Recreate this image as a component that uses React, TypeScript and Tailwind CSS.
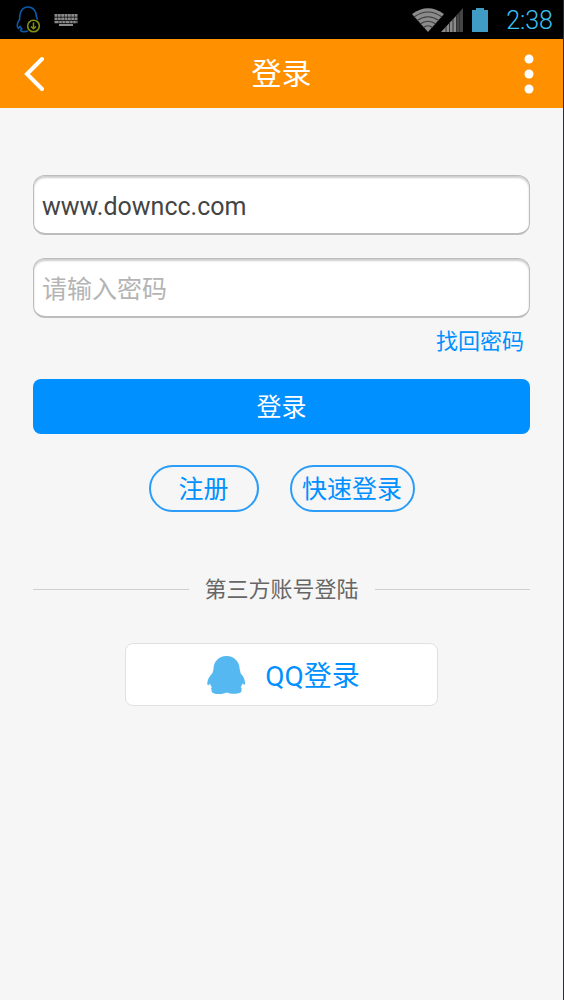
import { FunctionComponent, useState } from "react";

const QQOutlineIcon: FunctionComponent = () => (
  <svg className="w-6 h-7" viewBox="0 0 24 28" fill="none">
    <path d="M12 25c-2.500 1-7 .8-7.500-.6 0-.8 1.200-1.200 1.500-1.600-1-.5-1.800-1.500-2-2.600L2.300 22.500c-1.800-1.500-1.200-6.500 1.300-8.800C3.500 5.500 6.500 1 12 1s8.500 4.500 8.500 10c.5.700.8 1.500.7 2.700" stroke="#0d58a8" strokeWidth="1.600" strokeLinejoin="round" />
    <circle cx="17.500" cy="20" r="5.800" fill="#000" stroke="#83900f" strokeWidth="1.600" />
    <path d="M17.500 16.500v6M15 20.500l2.500 2.300 2.500-2.300" stroke="#83900f" strokeWidth="1.500" />
  </svg>
)

const KeyboardIcon: FunctionComponent = () => (
  <svg className="w-6 h-3" viewBox="0 0 24 12" stroke="#8a8a8a">
    <path d="M0.500 1.400h23M0.500 4.800h23" strokeWidth="2.600" strokeDasharray="2.900 0.450" />
    <path d="M0.500 8h23" strokeWidth="2.300" strokeDasharray="4.200 0.500 2.600 0.500 2.600 0.500" />
    <path d="M5 11h14" strokeWidth="2" />
  </svg>
)

const WifiIcon: FunctionComponent = () => (
  <svg className="w-8 h-6" viewBox="0 0 32 24">
    <path d="M0 6Q16-5.500 32 6L16 24z" fill="#8b8b8b" />
    <path d="M2 9Q16-1 30 9M5 12.500Q16 5 27 12.500M8 16Q16 10.500 24 16M11.500 19.500Q16 16 20.500 19.500" fill="none" stroke="#3c3c3c" strokeWidth="1.200" />
  </svg>
)

const SignalIcon: FunctionComponent = () => (
  <svg className="w-6 h-6" viewBox="0 0 24 24">
    <path d="M1 24L16 8v16z" fill="#8b8b8b" />
    <path d="M16 8l7-8v24h-7z" fill="#454545" />
    <path d="M6 18v6M9.500 14v10M13 11v13M16.500 7v17M19.500 4v20" stroke="#333" strokeWidth="1" />
  </svg>
)

const BatteryIcon: FunctionComponent = () => (
  <svg className="w-4 h-6" viewBox="0 0 16 25" preserveAspectRatio="none">
    <path d="M0 2h4V0h8v2h4v23H0z" fill="#409cc5" />
  </svg>
)

const QQIcon: FunctionComponent = () => (
  <svg className="w-[38px] h-10" viewBox="0 0 38 40" fill="#56b8f0">
    <path d="M19.500 1C11.500 1 6.500 7 6.500 14c0 1.500-.8 2.500-1 4C2 21.500 .3 25 .3 28.500c0 2 .8 2 1.700 1.200l1.300-1c.3 1.700 1 2.800 1.700 3.800-1.300.3-1.300 1.300-.2 2-1.200 2.500 1 4.500 7 4.500 4 0 6.200-.6 8-1.500 2 .9 5 1.500 8.500 1.300 5.500-.3 7.200-2.300 6-4.500 1-1 .5-1.500-.7-2 .8-1 1.500-2.300 1.900-3.800l1.300 1c.7.5 1.200.5 1.200-1 0-3.500-1.200-7-4.500-10.500 0-1.500-.6-2.500-.8-4C32.500 7 27.500 1 19.500 1z" />
  </svg>
)

export default function App() {

  const [userName, setUserName] = useState("www.downcc.com");
  const [password, setPassword] = useState("");

  return (
    <div className="min-h-screen flex flex-col bg-[#f6f6f6] border-r border-[#263238] font-['Roboto','Noto_Sans_CJK_SC',sans-serif]">
      <div className="h-[39px] bg-black flex items-center justify-between pl-4 pr-[10px]">
        <div className="flex items-center gap-[14px]">
          <QQOutlineIcon />
          <KeyboardIcon />
        </div>
        <div className="flex items-center">
          <div className="flex items-center -space-x-1 mr-2">
            <WifiIcon />
            <SignalIcon />
          </div>
          <BatteryIcon />
          <span className="ml-[18px] pt-[2px] text-[25px] leading-8 font-light text-[#3cc0f0]">2:38</span>
        </div>
      </div>

      <header className="h-[69px] bg-[#ff9000] text-white grid grid-cols-3 items-center px-6">
        <button type="button" aria-label="返回" className="justify-self-start">
          <svg className="w-5 h-9" viewBox="0 0 20 36" fill="none" stroke="currentColor" strokeWidth="4" strokeLinecap="round">
            <path d="M18 3L3 18 18 33" />
          </svg>
        </button>
        <h1 className="text-center text-[30px] leading-9">登录</h1>
        <button type="button" aria-label="更多" className="justify-self-end px-[5px]">
          <svg className="w-[10px] h-10" viewBox="0 0 10 40" fill="currentColor">
            <circle cx="5" cy="5" r="4.500" />
            <circle cx="5" cy="20" r="4.500" />
            <circle cx="5" cy="35" r="4.500" />
          </svg>
        </button>
      </header>

      <main className="px-[33px] pt-[67px]">
        <form onSubmit={(e) => e.preventDefault()}>
          <input
            type="text"
            aria-label="账号"
            className="block w-full h-[60px] px-2 pt-1 rounded-xl border border-b-2 border-[#bdbdbd] bg-white text-[25px] text-[#444] outline-none shadow-[inset_0_2px_2px_rgba(0,0,0,0.2)]"
            value={userName}
            onChange={(e) => setUserName(e.target.value)}
          />
          <input
            type="password"
            aria-label="密码"
            placeholder="请输入密码"
            className="block w-full h-[60px] mt-[23px] px-2 pt-1 rounded-xl border border-b-2 border-[#bdbdbd] bg-white text-[25px] text-[#444] placeholder:text-[#b4b4b4] outline-none shadow-[inset_0_2px_2px_rgba(0,0,0,0.2)]"
            value={password}
            onChange={(e) => setPassword(e.target.value)}
          />
          <div className="flex justify-end pt-2 pb-[21px] pr-[6px]">
            <a href="#" className="text-[22px] leading-8 text-[#0090ff]">找回密码</a>
          </div>
          <button type="submit" className="block w-full h-[55px] pt-[2px] rounded-lg bg-[#0090ff] text-[25px] text-white">登录</button>
        </form>

        <div className="flex justify-center gap-[31px] mt-[31px]">
          <button type="button" className="w-[110px] h-[47px] pt-[2px] rounded-full border-2 border-[#2b9df8] text-[25px] leading-9 text-[#0090ff]">注册</button>
          <button type="button" className="w-[125px] h-[47px] pt-[2px] rounded-full border-2 border-[#2b9df8] text-[25px] leading-9 text-[#0090ff]">快速登录</button>
        </div>

        <div className="flex items-center gap-4 mt-[60px]">
          <div className="flex-1 border-t border-[#d0d0d0]" />
          <span className="pt-[2px] text-[22px] leading-8 text-[#666]">第三方账号登陆</span>
          <div className="flex-1 border-t border-[#d0d0d0]" />
        </div>

        <button type="button" className="flex items-center justify-center gap-5 w-[313px] h-[63px] mx-auto mt-[37px] pl-1 rounded-lg border border-[#e0e0e0] bg-white text-[28px] text-[#0090ff]">
          <QQIcon />
          <span className="pt-1">QQ登录</span>
        </button>
      </main>
    </div>
  )
}
